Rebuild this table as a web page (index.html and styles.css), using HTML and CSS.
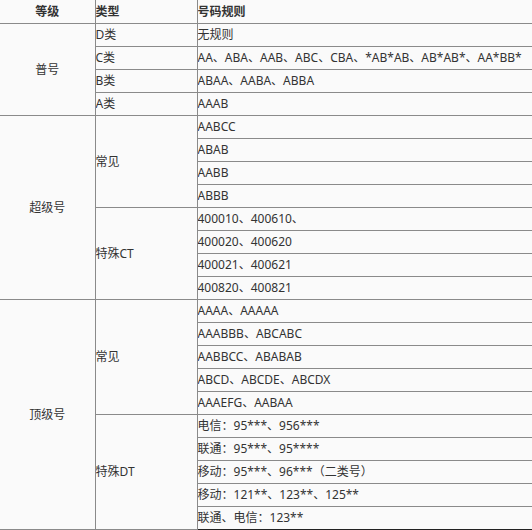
FILE: index.html
```html
<!DOCTYPE html>
<html lang="zh-CN">
<head>
<meta charset="utf-8">
<title>号码规则</title>
<link rel="stylesheet" href="styles.css">
</head>
<body>
<table class="rules">
  <colgroup>
    <col class="c-level">
    <col class="c-type">
    <col class="c-rule">
  </colgroup>
  <thead>
    <tr>
      <th class="center">等级</th>
      <th>类型</th>
      <th>号码规则</th>
    </tr>
  </thead>
  <tbody>
    <tr><td class="center" rowspan="4">普号</td><td>D类</td><td>无规则</td></tr>
    <tr><td>C类</td><td>AA、ABA、AAB、ABC、CBA、*AB*AB、AB*AB*、AA*BB*</td></tr>
    <tr><td>B类</td><td>ABAA、AABA、ABBA</td></tr>
    <tr><td>A类</td><td>AAAB</td></tr>

    <tr><td class="center" rowspan="8">超级号</td><td rowspan="4">常见</td><td>AABCC</td></tr>
    <tr><td>ABAB</td></tr>
    <tr><td>AABB</td></tr>
    <tr><td>ABBB</td></tr>
    <tr><td rowspan="4">特殊CT</td><td>400010、400610、</td></tr>
    <tr><td>400020、400620</td></tr>
    <tr><td>400021、400621</td></tr>
    <tr><td>400820、400821</td></tr>

    <tr><td class="center" rowspan="10">顶级号</td><td rowspan="5">常见</td><td>AAAA、AAAAA</td></tr>
    <tr><td>AAABBB、ABCABC</td></tr>
    <tr><td>AABBCC、ABABAB</td></tr>
    <tr><td>ABCD、ABCDE、ABCDX</td></tr>
    <tr><td>AAAEFG、AABAA</td></tr>
    <tr><td rowspan="5">特殊DT</td><td>电信<span class="fw">：</span>95***、956***</td></tr>
    <tr><td>联通<span class="fw">：</span>95***、95****</td></tr>
    <tr><td>移动<span class="fw">：</span>95***、96***<span class="fw">（</span>二类号<span class="fw">）</span></td></tr>
    <tr><td>移动<span class="fw">：</span>121**、123**、125**</td></tr>
    <tr class="last"><td>联通、电信<span class="fw">：</span>123**</td></tr>
  </tbody>
</table>
</body>
</html>
```

FILE: styles.css
```css
html, body {
  margin: 0;
  padding: 0;
  background: #fafafa;
}

body {
  font-family: "Noto Sans", "Noto Sans CJK SC", "Microsoft YaHei", sans-serif;
  font-size: 12px;
  color: #333;
}

.rules {
  width: 532px;
  border-collapse: collapse;
  table-layout: fixed;
}

.c-level { width: 95px; }
.c-type { width: 102px; }

.rules th,
.rules td {
  border: 1px solid #8a8a8a;
  padding: 0;
  text-align: left;
  vertical-align: middle;
  line-height: 22px;
  height: 22px;
  white-space: nowrap;
  overflow: hidden;
}

.rules th {
  border-top: none;
  height: 23px;
  font-weight: bold;
}

.rules th:first-child,
.rules td.center {
  border-left: none;
}

.rules th:last-child,
.rules td:last-child {
  border-right: none;
}

.rules .center {
  text-align: center;
}

.rules tr.last td {
  border-bottom: 1px solid #222;
}

/* centred full-width punctuation, as in the reference */
.fw {
  font-family: "Noto Sans CJK JP", "Noto Sans CJK SC", sans-serif;
  line-height: 0;
}
```
